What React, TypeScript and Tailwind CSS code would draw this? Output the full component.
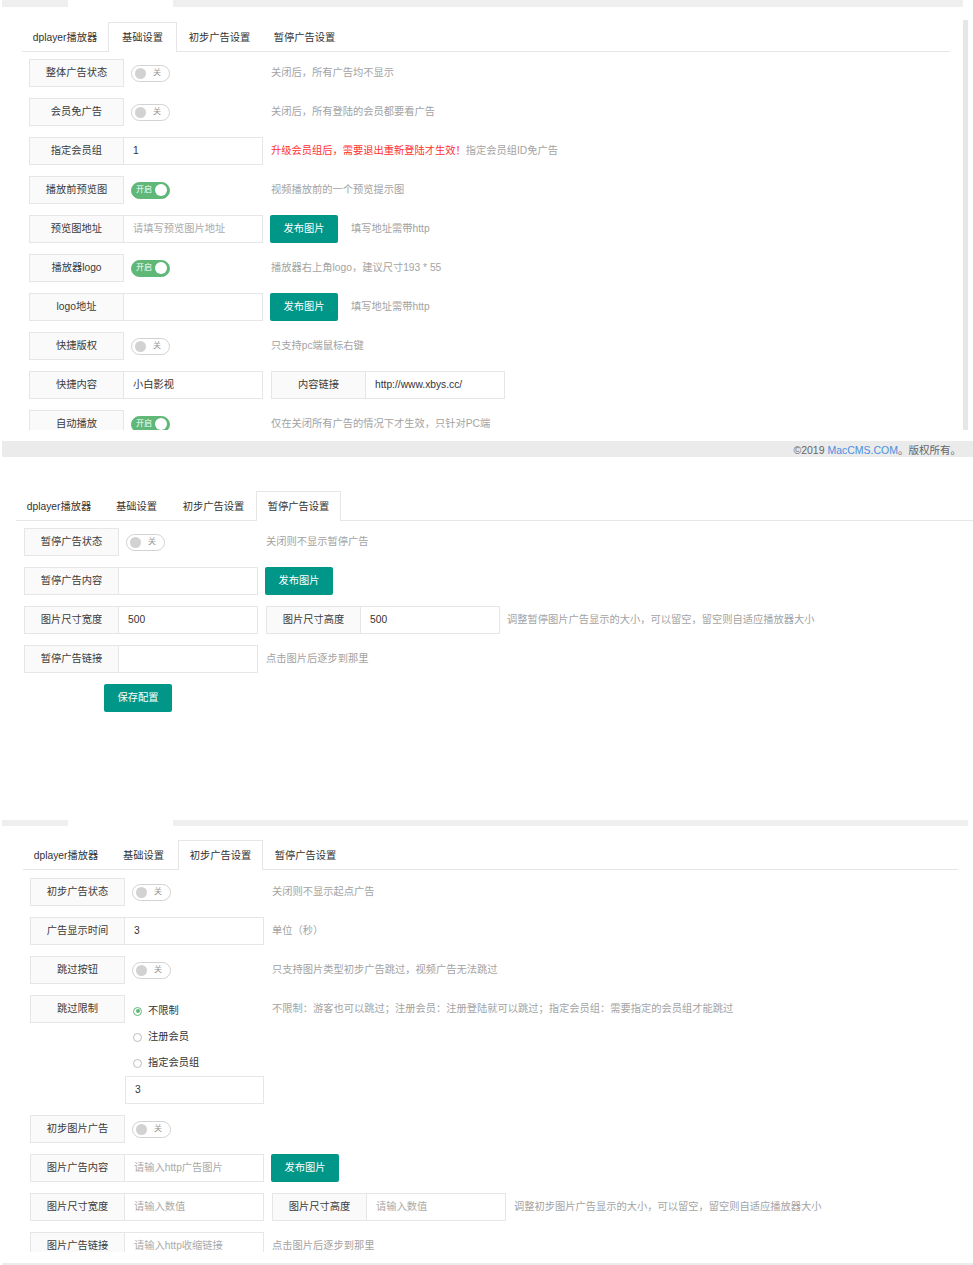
import React from "react";

type Kids = { children?: React.ReactNode };

const Label = ({ children }: Kids) => (
  <div className="flex h-[28px] w-[95px] shrink-0 items-center justify-center border border-[#e6e6e6] bg-[#fafafa] text-[#3a3a3a]">
    {children}
  </div>
);

const Input = ({ value, placeholder }: { value?: string; placeholder?: string }) => (
  <div className="flex h-[28px] w-[139px] shrink-0 items-center border border-l-0 border-[#e6e6e6] bg-white pl-[9px]">
    {value ? <span className="text-[#333]">{value}</span> : <span className="text-[#aaa]">{placeholder}</span>}
  </div>
);

const Switch = ({ on }: { on?: boolean }) => (
  <div className="flex h-[28px] w-[139px] shrink-0 items-center pl-[7px]">
    {on ? (
      <div className="flex h-[17px] w-[39px] items-center justify-between rounded-full border border-[#5FB878] bg-[#5FB878] pl-[4px] pr-[2px]">
        <span className="text-[8px] leading-none text-white">开启</span>
        <span className="h-[12px] w-[12px] rounded-full bg-white" />
      </div>
    ) : (
      <div className="flex h-[17px] w-[39px] items-center rounded-full border border-[#d2d2d2] bg-white pl-[3px]">
        <span className="h-[11px] w-[11px] rounded-full bg-[#d2d2d2]" />
        <span className="ml-[7px] text-[8px] leading-none text-[#999]">关</span>
      </div>
    )}
  </div>
);

const Help = ({ children, ml = "ml-[8px]" }: Kids & { ml?: string }) => (
  <div className={`${ml} whitespace-nowrap text-[#a3a3a3]`}>{children}</div>
);

const Btn = ({ children, ml = "ml-[7px]" }: Kids & { ml?: string }) => (
  <div className={`${ml} flex h-[28px] w-[68px] shrink-0 items-center justify-center rounded-[2px] bg-[#009688] text-white`}>
    {children}
  </div>
);

const Row = ({ children }: Kids) => <div className="mb-[11px] flex h-[28px] items-center">{children}</div>;

const Tabs = ({ active }: { active: number }) => {
  const names = ["dplayer播放器", "基础设置", "初步广告设置", "暂停广告设置"];
  const widths = ["w-[86px]", "w-[69px]", "w-[85px]", "w-[85px]"];
  return (
    <div className="flex h-[30px] border-b border-[#e6e6e6]">
      {names.map((n, i) =>
        i === active ? (
          <div
            key={n}
            className={`${widths[i]} relative flex h-[30px] items-center justify-center border border-b-0 border-[#e6e6e6] bg-white pt-[2px] text-[#333]`}
          >
            {n}
          </div>
        ) : (
          <div key={n} className={`${widths[i]} flex h-[29px] items-center justify-center pt-[3px] text-[#333]`}>
            {n}
          </div>
        )
      )}
    </div>
  );
};

const TopStrip = ({ end, h }: { end: string; h: string }) => (
  <div className={`flex ${h}`}>
    <div className="ml-[2px] w-[66px] bg-[#efefef]" />
    <div className="w-[105px] bg-white" />
    <div className={`${end} bg-[#efefef]`} />
  </div>
);

const Radio = ({ checked, children }: Kids & { checked?: boolean }) => (
  <div className="flex h-[26px] items-center pl-[8px]">
    {checked ? (
      <span className="flex h-[9px] w-[9px] items-center justify-center rounded-full border border-[#5FB878]">
        <span className="h-[4px] w-[4px] rounded-full bg-[#5FB878]" />
      </span>
    ) : (
      <span className="h-[9px] w-[9px] rounded-full border border-[#bdbdbd]" />
    )}
    <span className="ml-[6px] text-[#333]">{children}</span>
  </div>
);

export default function App() {
  return (
    <div className="w-[973px] bg-white font-['Liberation_Sans','Noto_Sans_CJK_SC',sans-serif] text-[10.25px] leading-none">
      {/* Panel 1 */}
      <div className="flex h-[457px] flex-col">
        <TopStrip end="w-[790px]" h="h-[7px]" />
        <div className="flex h-[423px]">
          <div className="w-[963px] overflow-hidden">
            <div className="ml-[22px] mr-[13px] pt-[15px]">
              <Tabs active={1} />
            </div>
            <div className="ml-[29px] mt-[7px]">
              <Row>
                <Label>整体广告状态</Label>
                <Switch />
                <Help>关闭后，所有广告均不显示</Help>
              </Row>
              <Row>
                <Label>会员免广告</Label>
                <Switch />
                <Help>关闭后，所有登陆的会员都要看广告</Help>
              </Row>
              <Row>
                <Label>指定会员组</Label>
                <Input value="1" />
                <Help>
                  <span className="text-[#ff3030]">升级会员组后，需要退出重新登陆才生效！</span>指定会员组ID免广告
                </Help>
              </Row>
              <Row>
                <Label>播放前预览图</Label>
                <Switch on />
                <Help>视频播放前的一个预览提示图</Help>
              </Row>
              <Row>
                <Label>预览图地址</Label>
                <Input placeholder="请填写预览图片地址" />
                <Btn>发布图片</Btn>
                <Help ml="ml-[13px]">填写地址需带http</Help>
              </Row>
              <Row>
                <Label>播放器logo</Label>
                <Switch on />
                <Help>播放器右上角logo，建议尺寸193 * 55</Help>
              </Row>
              <Row>
                <Label>logo地址</Label>
                <Input />
                <Btn>发布图片</Btn>
                <Help ml="ml-[13px]">填写地址需带http</Help>
              </Row>
              <Row>
                <Label>快捷版权</Label>
                <Switch />
                <Help>只支持pc端鼠标右键</Help>
              </Row>
              <Row>
                <Label>快捷内容</Label>
                <Input value="小白影视" />
                <div className="ml-[8px] flex">
                  <Label>内容链接</Label>
                  <Input value="http://www.xbys.cc/" />
                </div>
              </Row>
              <Row>
                <Label>自动播放</Label>
                <Switch on />
                <Help>仅在关闭所有广告的情况下才生效，只针对PC端</Help>
              </Row>
            </div>
          </div>
          <div className="mt-[13px] w-[5px] bg-[#e6e6e6]" />
        </div>
        <div className="h-[11px]" />
        <div className="ml-[2px] flex h-[16px] items-center justify-end bg-[#ebebeb] pr-[12px] pt-[3px] text-[10.5px] text-[#666]">
          ©2019&nbsp;<span className="text-[#4a8fe0]">MacCMS.COM</span>。版权所有。
        </div>
      </div>

      {/* Panel 2 */}
      <div className="h-[363px] overflow-hidden">
        <div className="ml-[16px] pt-[34px]">
          <Tabs active={3} />
        </div>
        <div className="ml-[24px] mt-[7px]">
          <Row>
            <Label>暂停广告状态</Label>
            <Switch />
            <Help>关闭则不显示暂停广告</Help>
          </Row>
          <Row>
            <Label>暂停广告内容</Label>
            <Input />
            <Btn>发布图片</Btn>
          </Row>
          <Row>
            <Label>图片尺寸宽度</Label>
            <Input value="500" />
            <div className="ml-[8px] flex">
              <Label>图片尺寸高度</Label>
              <Input value="500" />
            </div>
            <Help ml="ml-[7px]">调整暂停图片广告显示的大小，可以留空，留空则自适应播放器大小</Help>
          </Row>
          <Row>
            <Label>暂停广告链接</Label>
            <Input />
            <Help>点击图片后逐步到那里</Help>
          </Row>
          <div className="ml-[80px] flex h-[28px] w-[68px] items-center justify-center rounded-[2px] bg-[#009688] text-white">
            保存配置
          </div>
        </div>
      </div>

      {/* Panel 3 */}
      <div className="flex h-[445px] flex-col">
        <TopStrip end="w-[795px]" h="h-[6px]" />
        <div className="h-[426px] overflow-hidden">
          <div className="ml-[23px] mr-[15px] pt-[14px]">
            <Tabs active={2} />
          </div>
          <div className="ml-[30px] mt-[8px]">
            <Row>
              <Label>初步广告状态</Label>
              <Switch />
              <Help>关闭则不显示起点广告</Help>
            </Row>
            <Row>
              <Label>广告显示时间</Label>
              <Input value="3" />
              <Help>单位（秒）</Help>
            </Row>
            <Row>
              <Label>跳过按钮</Label>
              <Switch />
              <Help>只支持图片类型初步广告跳过，视频广告无法跳过</Help>
            </Row>
            <div className="mb-[11px] flex items-start">
              <Label>跳过限制</Label>
              <div className="w-[139px] shrink-0 pt-[3px]">
                <Radio checked>不限制</Radio>
                <Radio>注册会员</Radio>
                <Radio>指定会员组</Radio>
                <div className="flex h-[28px] w-[139px] items-center border border-[#e6e6e6] bg-white pl-[9px] text-[#333]">
                  3
                </div>
              </div>
              <div className="flex h-[28px] items-center">
                <Help>不限制：游客也可以跳过；注册会员：注册登陆就可以跳过；指定会员组：需要指定的会员组才能跳过</Help>
              </div>
            </div>
            <Row>
              <Label>初步图片广告</Label>
              <Switch />
            </Row>
            <Row>
              <Label>图片广告内容</Label>
              <Input placeholder="请输入http广告图片" />
              <Btn>发布图片</Btn>
            </Row>
            <Row>
              <Label>图片尺寸宽度</Label>
              <Input placeholder="请输入数值" />
              <div className="ml-[8px] flex">
                <Label>图片尺寸高度</Label>
                <Input placeholder="请输入数值" />
              </div>
              <Help ml="ml-[8px]">调整初步图片广告显示的大小，可以留空，留空则自适应播放器大小</Help>
            </Row>
            <Row>
              <Label>图片广告链接</Label>
              <Input placeholder="请输入http收缩链接" />
              <Help>点击图片后逐步到那里</Help>
            </Row>
          </div>
        </div>
        <div className="h-[11px]" />
        <div className="ml-[2px] h-[2px] bg-[#ececec]" />
      </div>
    </div>
  );
}
